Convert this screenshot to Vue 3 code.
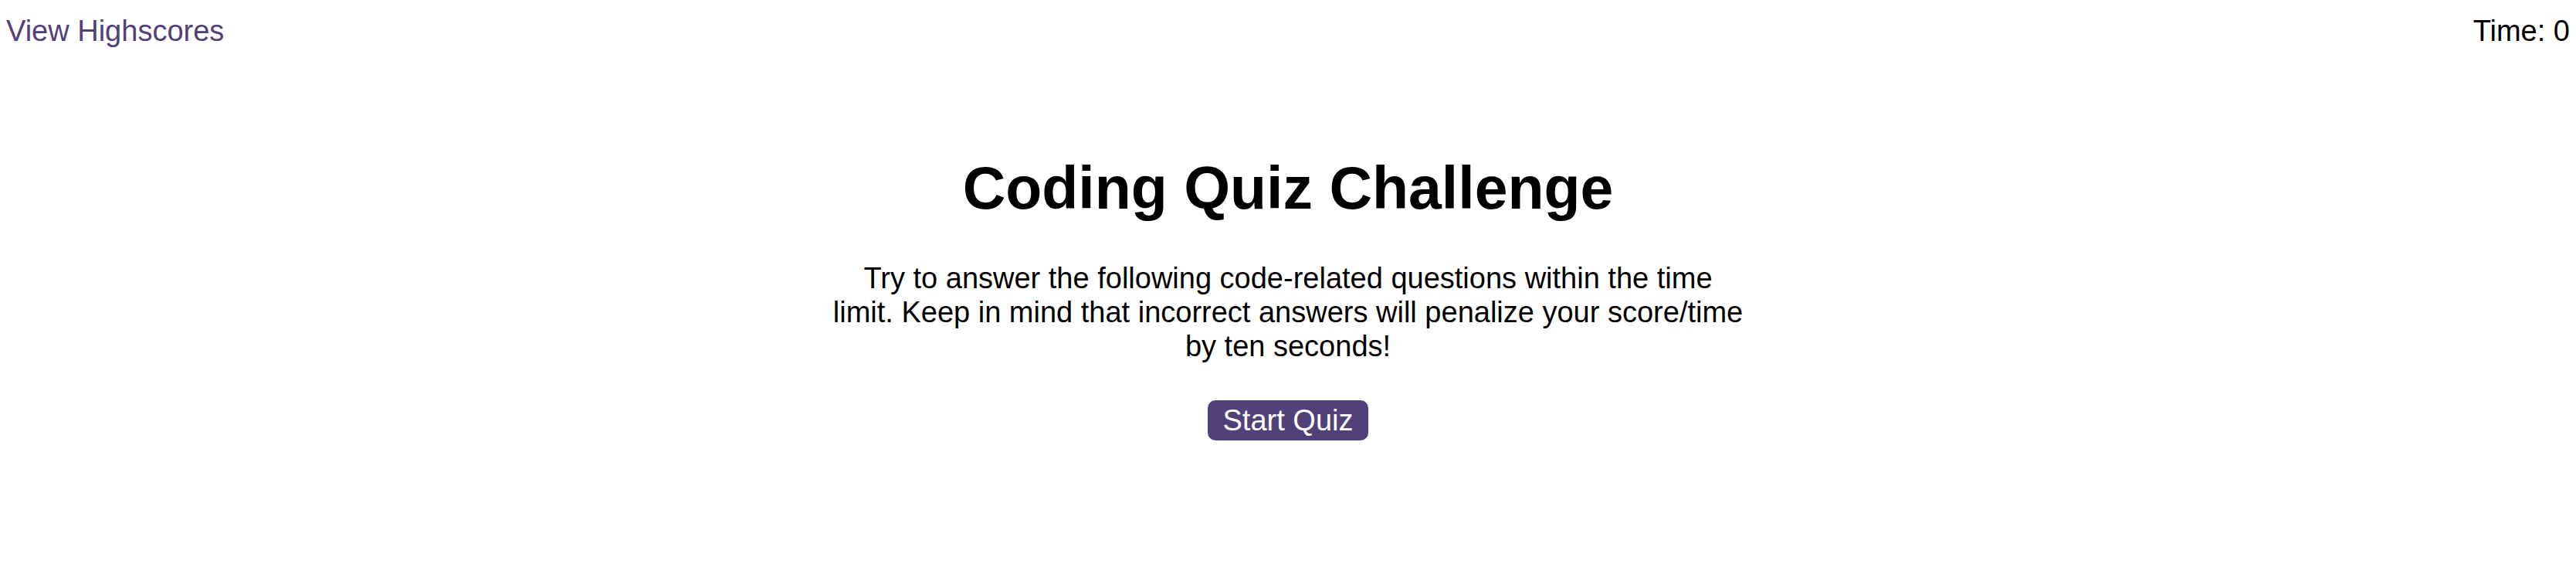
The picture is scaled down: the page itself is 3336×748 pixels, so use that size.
<script setup>
import { ref } from 'vue'

const time = ref(0)
</script>

<template>
  <div class="page">
    <header class="bar">
      <a class="scores" href="#highscores">View Highscores</a>
      <div class="timer">Time: <span>{{ time }}</span></div>
    </header>
    <main class="start">
      <h1>Coding Quiz Challenge</h1>
      <p>
        Try to answer the following code-related questions within the time
        limit. Keep in mind that incorrect answers will penalize your score/time
        by ten seconds!
      </p>
      <button type="button">Start Quiz</button>
    </main>
  </div>
</template>

<style>
body {
  margin: 0;
  background: #ffffff;
}
</style>

<style scoped>
.page {
  font-family: Arial, "Liberation Sans", sans-serif;
  font-size: 38px;
  line-height: 44px;
  color: #000000;
}

.bar {
  display: flex;
  justify-content: space-between;
  padding: 18px 8px 0;
}

.scores {
  color: #524178;
  text-decoration: none;
}

.start {
  max-width: 1184px;
  margin: 136px auto 0;
  text-align: center;
}

h1 {
  margin: 0 0 50px;
  font-size: 77px;
  line-height: 90px;
}

p {
  margin: 0 0 48px;
}

button {
  padding: 4px 20px;
  border: 0;
  border-radius: 10px;
  background: #524178;
  color: #ffffff;
  font: inherit;
  cursor: pointer;
}
</style>
